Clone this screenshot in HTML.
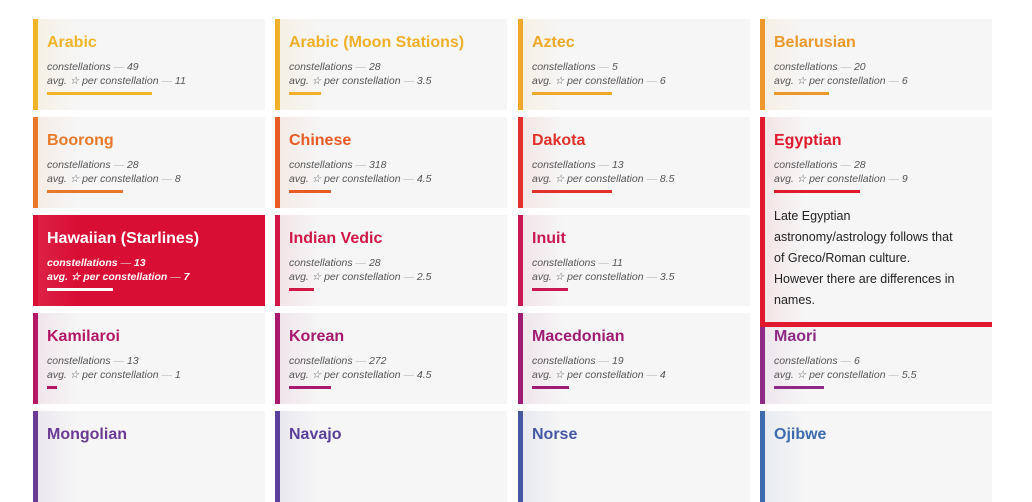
<!DOCTYPE html><html><head><style>
body{margin:0;width:1032px;height:452px;background:#fff;overflow:hidden;position:relative;font-family:"Liberation Sans",sans-serif}
.c{position:absolute;width:227px;height:91px;background:#f6f6f6;border-left:5px solid var(--k);box-sizing:content-box}
.c::before{content:"";position:absolute;left:0;top:0;bottom:0;width:40px;background:linear-gradient(90deg,var(--k),transparent);opacity:.08}
.t{position:absolute;left:9px;top:15px;font-size:16px;font-weight:bold;color:var(--k);white-space:nowrap}
.s{position:absolute;left:9px;top:41px;font-size:10.5px;font-style:italic;color:#555;line-height:14px;white-space:nowrap}
.s b{font-weight:normal;color:#bbb}
.b{position:absolute;left:9px;top:73px;height:3px;background:var(--k)}
.h{background:#d90e35;border-left-color:#d90e35}
.h .t,.h .s{color:#fff}.h .b{background:#fff}.h .s b{color:#ddd}.h .s{font-weight:bold}
.e{height:205px;border-bottom:5px solid #e0192f;z-index:2}
.d{position:absolute;left:9px;top:89px;width:215px;font-size:12.5px;line-height:21px;color:#222;white-space:nowrap}
</style></head><body>
<div class="c" style="left:33px;top:19px;--k:#f0b429"><div class="t">Arabic</div><div class="s">constellations <b>—</b> 49<br>avg. ☆ per constellation <b>—</b> 11</div><div class="b" style="width:105px"></div></div>
<div class="c" style="left:275px;top:19px;--k:#f0b02a"><div class="t">Arabic (Moon Stations)</div><div class="s">constellations <b>—</b> 28<br>avg. ☆ per constellation <b>—</b> 3.5</div><div class="b" style="width:32px"></div></div>
<div class="c" style="left:518px;top:19px;--k:#f0a82a"><div class="t">Aztec</div><div class="s">constellations <b>—</b> 5<br>avg. ☆ per constellation <b>—</b> 6</div><div class="b" style="width:80px"></div></div>
<div class="c" style="left:760px;top:19px;--k:#ec982c"><div class="t">Belarusian</div><div class="s">constellations <b>—</b> 20<br>avg. ☆ per constellation <b>—</b> 6</div><div class="b" style="width:55px"></div></div>

<div class="c" style="left:33px;top:117px;--k:#e9792a"><div class="t">Boorong</div><div class="s">constellations <b>—</b> 28<br>avg. ☆ per constellation <b>—</b> 8</div><div class="b" style="width:76px"></div></div>
<div class="c" style="left:275px;top:117px;--k:#e85b24"><div class="t">Chinese</div><div class="s">constellations <b>—</b> 318<br>avg. ☆ per constellation <b>—</b> 4.5</div><div class="b" style="width:42px"></div></div>
<div class="c" style="left:518px;top:117px;--k:#e2302a"><div class="t">Dakota</div><div class="s">constellations <b>—</b> 13<br>avg. ☆ per constellation <b>—</b> 8.5</div><div class="b" style="width:80px"></div></div>
<div class="c e" style="left:760px;top:117px;--k:#e0192f"><div class="t">Egyptian</div><div class="s">constellations <b>—</b> 28<br>avg. ☆ per constellation <b>—</b> 9</div><div class="b" style="width:86px"></div><div class="d">Late Egyptian<br>astronomy/astrology follows that<br>of Greco/Roman culture.<br>However there are differences in<br>names.</div></div>

<div class="c h" style="left:33px;top:215px;--k:#fff"><div class="t">Hawaiian (Starlines)</div><div class="s">constellations <b>—</b> 13<br>avg. ☆ per constellation <b>—</b> 7</div><div class="b" style="width:66px"></div></div>
<div class="c" style="left:275px;top:215px;--k:#d11747"><div class="t">Indian Vedic</div><div class="s">constellations <b>—</b> 28<br>avg. ☆ per constellation <b>—</b> 2.5</div><div class="b" style="width:25px"></div></div>
<div class="c" style="left:518px;top:215px;--k:#c81753"><div class="t">Inuit</div><div class="s">constellations <b>—</b> 11<br>avg. ☆ per constellation <b>—</b> 3.5</div><div class="b" style="width:36px"></div></div>

<div class="c" style="left:33px;top:313px;--k:#b31866"><div class="t">Kamilaroi</div><div class="s">constellations <b>—</b> 13<br>avg. ☆ per constellation <b>—</b> 1</div><div class="b" style="width:10px"></div></div>
<div class="c" style="left:275px;top:313px;--k:#a8196d"><div class="t">Korean</div><div class="s">constellations <b>—</b> 272<br>avg. ☆ per constellation <b>—</b> 4.5</div><div class="b" style="width:42px"></div></div>
<div class="c" style="left:518px;top:313px;--k:#a01b73"><div class="t">Macedonian</div><div class="s">constellations <b>—</b> 19<br>avg. ☆ per constellation <b>—</b> 4</div><div class="b" style="width:37px"></div></div>
<div class="c" style="left:760px;top:313px;--k:#8e2a86"><div class="t">Maori</div><div class="s">constellations <b>—</b> 6<br>avg. ☆ per constellation <b>—</b> 5.5</div><div class="b" style="width:50px"></div></div>

<div class="c" style="left:33px;top:411px;--k:#6b3a94"><div class="t">Mongolian</div></div>
<div class="c" style="left:275px;top:411px;--k:#5a409a"><div class="t">Navajo</div></div>
<div class="c" style="left:518px;top:411px;--k:#4658a4"><div class="t">Norse</div></div>
<div class="c" style="left:760px;top:411px;--k:#3d6bae"><div class="t">Ojibwe</div></div>
</body></html>
